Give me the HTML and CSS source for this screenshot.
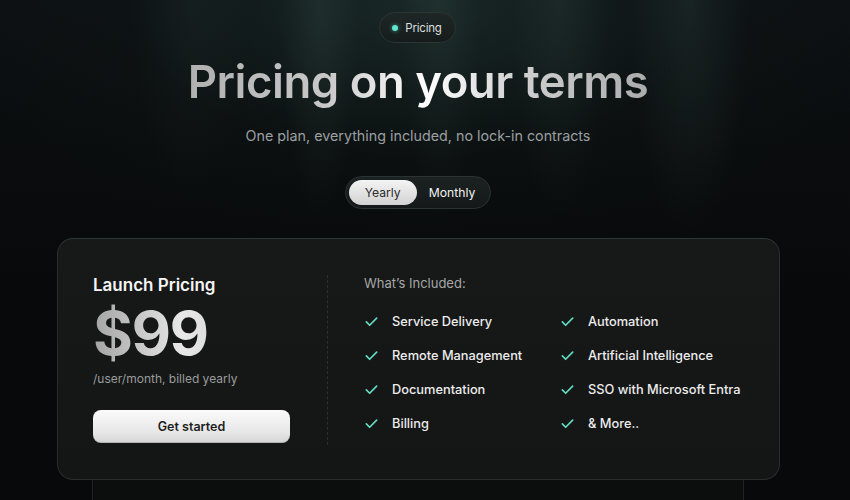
FILE: index.html
```html
<!DOCTYPE html>
<html lang="en">
<head>
<meta charset="utf-8">
<title>Pricing</title>
<link rel="stylesheet" href="styles.css">
</head>
<body>
<div class="page">
  <div class="beams"></div>
  <header class="hero">
    <div class="badge"><span class="dot"></span>Pricing</div>
    <h1 class="title">Pricing on your terms</h1>
    <p class="subtitle">One plan, everything included, no lock-in contracts</p>
    <div class="toggle">
      <span class="opt active">Yearly</span>
      <span class="opt">Monthly</span>
    </div>
  </header>
  <div class="card-wrap">
    <div class="card-back"></div>
    <section class="card">
      <div class="plan">
        <h2 class="plan-name">Launch Pricing</h2>
        <div class="price">$99</div>
        <div class="period">/user/month, billed yearly</div>
        <button class="cta">Get started</button>
      </div>
      <div class="divider"></div>
      <div class="included">
        <div class="inc-title">What’s Included:</div>
        <ul class="features">
          <li><svg viewBox="0 0 16 16"><path d="M2.5 8.5l3.5 3.5 7.5-7.5"/></svg>Service Delivery</li>
          <li><svg viewBox="0 0 16 16"><path d="M2.5 8.5l3.5 3.5 7.5-7.5"/></svg>Automation</li>
          <li><svg viewBox="0 0 16 16"><path d="M2.5 8.5l3.5 3.5 7.5-7.5"/></svg>Remote Management</li>
          <li><svg viewBox="0 0 16 16"><path d="M2.5 8.5l3.5 3.5 7.5-7.5"/></svg>Artificial Intelligence</li>
          <li><svg viewBox="0 0 16 16"><path d="M2.5 8.5l3.5 3.5 7.5-7.5"/></svg>Documentation</li>
          <li><svg viewBox="0 0 16 16"><path d="M2.5 8.5l3.5 3.5 7.5-7.5"/></svg>SSO with Microsoft Entra</li>
          <li><svg viewBox="0 0 16 16"><path d="M2.5 8.5l3.5 3.5 7.5-7.5"/></svg>Billing</li>
          <li><svg viewBox="0 0 16 16"><path d="M2.5 8.5l3.5 3.5 7.5-7.5"/></svg>&amp; More..</li>
        </ul>
      </div>
    </section>
  </div>
</div>
</body>
</html>
```
FILE: styles.css
```css
* { box-sizing: border-box; }
html, body { margin: 0; padding: 0; }
body {
  background: #08090a;
  font-family: Inter, "Noto Sans", sans-serif;
  color: #fff;
  overflow: hidden;
}
.page {
  position: relative;
  width: 850px;
  height: 500px;
  overflow: hidden;
  background:
    radial-gradient(ellipse 480px 260px at 418px 0%, rgba(40,70,64,0.45), rgba(20,35,33,0.15) 60%, rgba(0,0,0,0) 100%),
    linear-gradient(180deg, #0c1012 0%, #08090a 60%, #08090a 100%);
}
.beams {
  position: absolute;
  left: 0; top: 0; right: 0;
  height: 260px;
  pointer-events: none;
  background:
    radial-gradient(ellipse 40px 220px at 320px 0%, rgba(120,160,150,0.10), rgba(0,0,0,0) 100%),
    radial-gradient(ellipse 40px 220px at 440px 0%, rgba(120,160,150,0.08), rgba(0,0,0,0) 100%),
    radial-gradient(ellipse 50px 220px at 560px 0%, rgba(120,160,150,0.08), rgba(0,0,0,0) 100%),
    radial-gradient(ellipse 60px 240px at 690px 0%, rgba(120,170,160,0.10), rgba(0,0,0,0) 100%),
    radial-gradient(ellipse 60px 200px at 190px 0%, rgba(120,160,150,0.05), rgba(0,0,0,0) 100%);
}
.hero {
  position: relative;
  display: flex;
  flex-direction: column;
  align-items: center;
  padding: 12px 14px 0 0;
}
.badge {
  display: flex;
  align-items: center;
  gap: 7px;
  height: 31px;
  padding: 0 13px 0 12px;
  border-radius: 16px;
  background: linear-gradient(180deg, #1f2726 0%, #161c1c 100%);
  border: 1px solid #2a3432;
  font-size: 11.5px;
  letter-spacing: -0.2px;
  color: #d9dedd;
  margin-left: -1px;
}
.dot {
  width: 6px; height: 6px;
  border-radius: 50%;
  background: #5ee7cf;
  box-shadow: 0 0 4px rgba(94,231,207,0.6);
}
.title {
  margin: 10px 0 0;
  font-size: 45.5px;
  font-weight: 600;
  letter-spacing: -0.5px;
  line-height: 58px;
  background: linear-gradient(90deg, #b0b0b0 0%, #c8c8c8 30%, #ffffff 52%, #d0d0d0 72%, #ababab 100%);
  -webkit-background-clip: text;
  background-clip: text;
  color: transparent;
}
.subtitle {
  margin: 15px 0 0;
  font-size: 14.3px;
  color: #9c9fa0;
  line-height: 20px;
}
.toggle {
  margin-top: 30px;
  display: flex;
  align-items: center;
  height: 33px;
  padding: 3px;
  border-radius: 17px;
  background: linear-gradient(180deg, #1c2222 0%, #141818 100%);
  border: 1px solid #2b3332;
}
.opt {
  display: flex;
  align-items: center;
  justify-content: center;
  height: 25px;
  font-size: 12.2px;
  color: #f2f2f2;
  padding: 0 12px;
}
.opt.active {
  width: 68px;
  border-radius: 13px;
  background: linear-gradient(180deg, #f4f4f4 0%, #d2d2d2 100%);
  color: #2a2a2a;
}
.card-wrap {
  position: relative;
  margin: 29px 70px 0 57px;
}
.card-back {
  position: absolute;
  left: 35px; right: 36px;
  top: 40px;
  height: 240px;
  border-radius: 16px;
  border: 1px solid #202222;
  background: #0c0d0d;
}
.card {
  position: relative;
  display: flex;
  height: 242px;
  border-radius: 16px;
  background: linear-gradient(180deg, #171818 0%, #141515 100%);
  border: 1px solid #2b2d2d;
  border-top-color: #2e3a38;
  padding: 34px 36px 0 35px;
}
.plan {
  width: 198px;
  flex: none;
  display: flex;
  flex-direction: column;
}
.plan-name {
  margin: 0;
  font-size: 17px;
  font-weight: 600;
  line-height: 24px;
  color: #f5f5f5;
}
.price {
  margin-top: 6px;
  font-size: 61px;
  font-weight: 700;
  letter-spacing: -1.5px;
  line-height: 60px;
  background: linear-gradient(90deg, #a4a4a4 0%, #e8e8e8 45%, #bdbdbd 100%);
  -webkit-background-clip: text;
  background-clip: text;
  color: transparent;
}
.period {
  margin-top: 7px;
  font-size: 12px;
  color: #9a9c9c;
  line-height: 18px;
}
.cta {
  margin-top: 22px;
  height: 33px;
  width: 197px;
  border: 0;
  border-radius: 8px;
  background: linear-gradient(180deg, #fbfbfb 0%, #e6e6e6 70%, #d4d4d4 100%);
  box-shadow: inset 0 -1px 0 rgba(0,0,0,0.15);
  font-family: inherit;
  font-size: 12.5px;
  font-weight: 600;
  color: #1d1d1d;
}
.divider {
  flex: none;
  width: 0;
  margin: 2px 36px 0 36px;
  height: 170px;
  border-left: 1px dashed #2e3030;
}
.included {
  flex: 1;
  padding-top: 1px;
}
.inc-title {
  font-size: 13px;
  color: #a6a8a8;
  line-height: 18px;
}
.features {
  list-style: none;
  margin: 19px 0 0;
  padding: 0;
  display: grid;
  grid-template-columns: 196px 1fr;
  row-gap: 14px;
}
.features li {
  display: flex;
  align-items: center;
  gap: 13px;
  height: 20px;
  font-size: 12.8px;
  font-weight: 500;
  white-space: nowrap;
  color: #ececec;
}
.features svg {
  flex: none;
  width: 15px;
  height: 15px;
  fill: none;
  stroke: #63dcc4;
  stroke-width: 1.8;
  stroke-linecap: round;
  stroke-linejoin: round;
}
```
